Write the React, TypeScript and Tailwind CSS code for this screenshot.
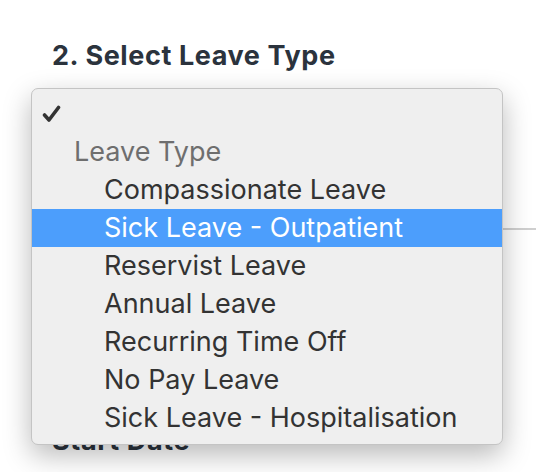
const options = [
  "Compassionate Leave",
  "Sick Leave - Outpatient",
  "Reservist Leave",
  "Annual Leave",
  "Recurring Time Off",
  "No Pay Leave",
  "Sick Leave - Hospitalisation",
];

const selected = "Sick Leave - Outpatient";

const App = () => {
  return (
    <div className="relative h-[472px] w-[536px] overflow-hidden bg-white font-['Inter',sans-serif]">
      <div className="pl-[52px] pt-[38px]">
        <h2 className="text-[27px] font-bold leading-[36px] tracking-[0.6px] text-[#2b333d]">
          2. Select Leave Type
        </h2>
        {/* field under the open menu */}
        <div className="mt-[154px] h-[2px] w-full bg-[#cfcfcf]" />
        <h2 className="mt-[193px] text-[27px] font-bold leading-[36px] tracking-[0.6px] text-[#2b333d]">
          Start Date
        </h2>
      </div>

      {/* open native-style select menu */}
      <div className="absolute left-[31px] top-[88px] w-[472px] rounded-[7px] border border-[#c4c4c4] bg-[#efefef] pt-[6px] pb-[7px] shadow-[0_10px_28px_rgba(0,0,0,0.28)] font-['Inter',sans-serif]">
        <div className="flex h-[38px] items-center pl-[10px] text-[#333]">
          <svg width="19" height="18" viewBox="0 0 19 18" fill="none">
            <path
              d="M2.5 10 L7 15 L16.5 2.5"
              stroke="#333333"
              strokeWidth="3.6"
              strokeLinecap="round"
              strokeLinejoin="round"
            />
          </svg>
        </div>
        <div className="flex h-[38px] items-center pl-[42px] text-[27px] text-[#6e6e6e]">
          Leave Type
        </div>
        {options.map((opt) => (
          <div
            key={opt}
            className={
              opt === selected
                ? "flex h-[38px] items-center bg-[#4c9efc] pl-[72px] text-[27px] text-white"
                : "flex h-[38px] items-center pl-[72px] text-[27px] text-[#333333]"
            }
          >
            {opt}
          </div>
        ))}
      </div>
    </div>
  );
};

export default App;
